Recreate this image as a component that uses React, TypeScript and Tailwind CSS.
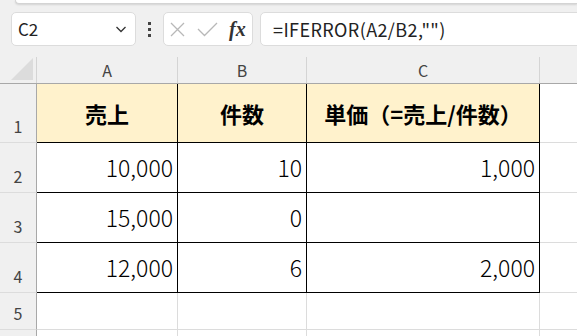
import React from "react";

const font = { fontFamily: '"Noto Sans CJK JP", "Noto Sans", sans-serif' };

const cols = ["A", "B", "C"];

const rows: { n: number; h: string; cells: string[]; head?: boolean }[] = [
  { n: 1, h: "h-[59px]", cells: ["売上", "件数", "単価（=売上/件数）"], head: true },
  { n: 2, h: "h-[50px]", cells: ["10,000", "10", "1,000"] },
  { n: 3, h: "h-[50px]", cells: ["15,000", "0", ""] },
  { n: 4, h: "h-[50px]", cells: ["12,000", "6", "2,000"] },
];

const widths = ["w-[141px]", "w-[129px]", "w-[233px]"];

function Chevron() {
  return (
    <svg width="14" height="14" viewBox="0 0 14 14" fill="none">
      <path d="M2.5 5l4.5 4.5L11.5 5" stroke="#333" strokeWidth="1.3" />
    </svg>
  );
}

export default function App() {
  return (
    <div className="w-[577px] h-[336px] overflow-hidden bg-[#f0f0f0] text-[#222]" style={font}>
      {/* ribbon edge */}
      <div className="ml-[15px] h-[4px] bg-white border-b border-l border-[#d4d4d4] rounded-bl-[4px] shadow-[0_1px_2px_rgba(0,0,0,0.12)]" />

      {/* formula bar */}
      <div className="flex items-start pt-[8px] h-[42px]">
        <div className="ml-[11px] shrink-0 w-[125px] h-[34px] bg-white border border-[#dcdcdc] rounded-[5px] flex items-center justify-between pl-[6px] pr-[7px]">
          <span className="text-[17px] text-[#222]">C2</span>
          <Chevron />
        </div>
        <div className="w-[27px] h-[34px] shrink-0 flex flex-col items-center justify-center gap-[3px]">
          <span className="w-[3px] h-[3px] bg-[#444]" />
          <span className="w-[3px] h-[3px] bg-[#444]" />
          <span className="w-[3px] h-[3px] bg-[#444]" />
        </div>
        <div className="w-[90px] shrink-0 h-[34px] bg-white border border-[#dcdcdc] rounded-[5px] flex items-center pl-[6px]">
          <svg width="15" height="15" viewBox="0 0 15 15">
            <path d="M1 1l13 13M14 1L1 14" stroke="#b8b8b8" strokeWidth="1.3" />
          </svg>
          <svg width="21" height="15" viewBox="0 0 21 15" className="ml-[12px]">
            <path d="M1 7l6.5 6.5L20 1" stroke="#b8b8b8" strokeWidth="1.3" fill="none" />
          </svg>
          <span
            className="ml-[11px] text-[20px] italic font-bold text-[#333] leading-none"
            style={{ fontFamily: '"Liberation Serif", "DejaVu Serif", serif' }}
          >
            fx
          </span>
        </div>
        <div className="ml-[7px] shrink-0 w-[340px] h-[34px] bg-white border border-[#dcdcdc] rounded-[5px] flex items-center pl-[12px]">
          <span className="text-[18px] tracking-[0.4px] text-[#222]">=IFERROR(A2/B2,"")</span>
        </div>
      </div>

      {/* sheet */}
      <div className="mt-[11px]">
        {/* column headers */}
        <div className="flex h-[27px] border-b border-[#a8a8a8]">
          <div className="w-[37px] shrink-0 border-r border-[#d4d4d4] relative">
            <svg width="24" height="24" viewBox="0 0 24 24" className="absolute left-[10px] top-[0px]">
              <path d="M23 1V23H1Z" fill="#dcdcdc" />
            </svg>
          </div>
          {cols.map((c, i) => (
            <div
              key={c}
              className={`${widths[i]} shrink-0 border-r border-[#d4d4d4] flex items-center justify-center text-[16px] text-[#444]`}
            >
              {c}
            </div>
          ))}
          <div className="flex-1" />
        </div>

        {rows.map((r) => (
          <div key={r.n} className={`flex ${r.h}`}>
            <div className="w-[37px] shrink-0 border-r border-b border-r-[#a8a8a8] border-b-[#dcdcdc] flex items-end justify-center pb-[4px] text-[16px] text-[#444]">
              {r.n}
            </div>
            {r.cells.map((v, i) => (
              <div
                key={i}
                className={`${widths[i]} shrink-0 border-r border-b border-black flex items-center ${
                  r.head
                    ? "bg-[#fff2cc] justify-center font-bold text-[22px] text-black"
                    : "bg-white justify-end pr-[4px] text-[23px] font-light text-black"
                }`}
              >
                {v}
              </div>
            ))}
            <div className="flex-1 bg-white border-b border-[#dcdcdc]" />
          </div>
        ))}

        <div className="flex h-[37px]">
          <div className="w-[37px] shrink-0 border-r border-b border-r-[#a8a8a8] border-b-[#dcdcdc] flex items-end justify-center pb-[4px] text-[16px] text-[#444]">
            5
          </div>
          {widths.map((w, i) => (
            <div key={i} className={`${w} shrink-0 bg-white border-r border-b border-[#dcdcdc]`} />
          ))}
          <div className="flex-1 bg-white border-b border-[#dcdcdc]" />
        </div>
        <div className="flex h-[37px]">
          <div className="w-[37px] shrink-0 border-r border-r-[#a8a8a8]" />
          {widths.map((w, i) => (
            <div key={i} className={`${w} shrink-0 bg-white border-r border-[#dcdcdc]`} />
          ))}
          <div className="flex-1 bg-white" />
        </div>
      </div>
    </div>
  );
}
